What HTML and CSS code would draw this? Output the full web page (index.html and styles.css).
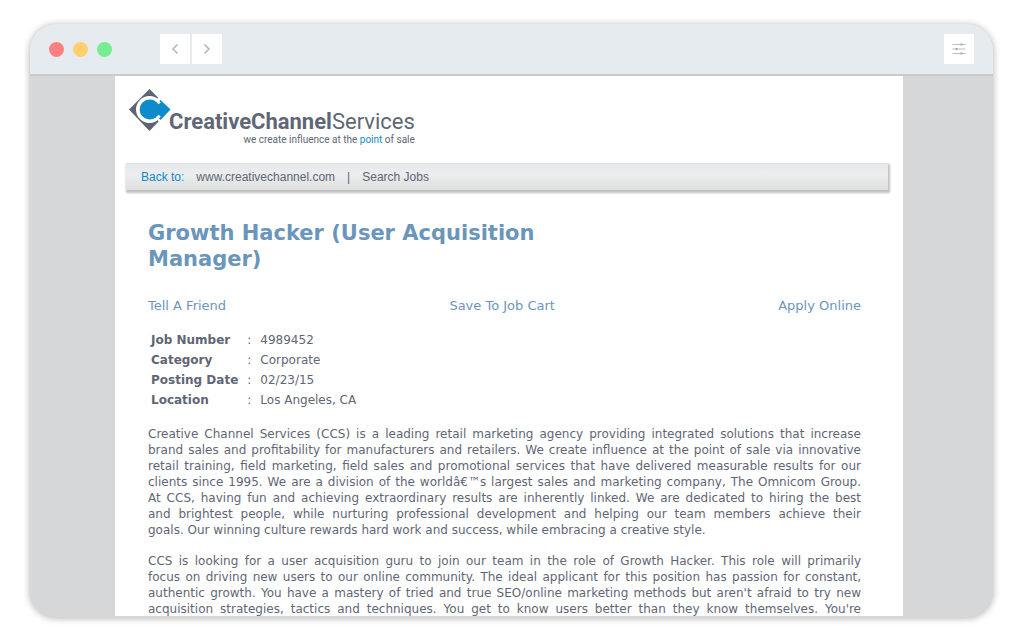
FILE: index.html
```
<!DOCTYPE html>
<html lang="en">
<head>
<meta charset="utf-8">
<title>Growth Hacker (User Acquisition Manager)</title>
<link rel="stylesheet" href="styles.css">
</head>
<body>
<div class="window">
  <header class="toolbar">
    <div class="lights"><span class="light red"></span><span class="light amber"></span><span class="light green"></span></div>
    <div class="nav">
      <button class="tool" type="button" aria-label="Back"><svg width="8" height="12" viewBox="0 0 8 12"><path d="M6.500 1.500 2 6l4.500 4.500"/></svg></button>
      <button class="tool" type="button" aria-label="Forward"><svg width="8" height="12" viewBox="0 0 8 12"><path d="M1.500 1.500 6 6l-4.500 4.500"/></svg></button>
    </div>
    <button class="tool settings" type="button" aria-label="Settings"><svg width="14" height="14" viewBox="0 0 14 14"><path class="thin" d="M0.500 2.500h13M0.500 7h13M0.500 11.500h13"/><path class="knob" d="M9.500 1.500v2M4.500 6v2M9.500 10.500v2"/></svg></button>
  </header>
  <div class="viewport">
    <main class="page">
      <div class="brand">
        <svg class="mark" width="42" height="42" viewBox="0 0 42 42">
          <path fill="#5d6473" d="M20.500 0 41 20.500 20.500 42 0 20.500z"/>
          <path fill="#fff" d="M20.500 20.500 30 7.500 33 10 44 20.500 31 34z"/>
          <circle cx="20.500" cy="20.500" r="13.500" fill="#fff"/>
          <path fill="#0d8bca" d="M20.500 20.500 31.500 11 41.500 20.500 31.500 31z"/>
          <circle cx="20.500" cy="20.500" r="10.500" fill="#0d8bca"/>
          <path fill="none" stroke="#fff" stroke-width="3" d="M30.500 14.500A11.500 11.500 0 1 0 30.500 26.500"/>
        </svg>
        <div class="words">
          <div class="name"><b>CreativeChannel</b>Services</div>
          <div class="tagline">we create influence at the <span>point</span> of sale</div>
        </div>
      </div>
      <nav class="crumbs"><span class="lead">Back to:</span><a href="#">www.creativechannel.com</a><span class="sep">|</span><a href="#">Search Jobs</a></nav>
      <article class="job">
        <h1>Growth Hacker (User Acquisition Manager)</h1>
        <div class="actions"><a href="#">Tell A Friend</a><a href="#">Save To Job Cart</a><a href="#">Apply Online</a></div>
        <table class="facts">
          <tr><th scope="row">Job Number</th><td>:</td><td>4989452</td></tr>
          <tr><th scope="row">Category</th><td>:</td><td>Corporate</td></tr>
          <tr><th scope="row">Posting Date</th><td>:</td><td>02/23/15</td></tr>
          <tr><th scope="row">Location</th><td>:</td><td>Los Angeles, CA</td></tr>
        </table>
        <p>Creative Channel Services (CCS) is a leading retail marketing agency providing integrated solutions that increase<br>
        brand sales and profitability for manufacturers and retailers. We create influence at the point of sale via innovative<br>
        retail training, field marketing, field sales and promotional services that have delivered measurable results for our<br>
        clients since 1995. We are a division of the worldâ€™s largest sales and marketing company, The Omnicom Group.<br>
        At CCS, having fun and achieving extraordinary results are inherently linked. We are dedicated to hiring the best<br>
        and brightest people, while nurturing professional development and helping our team members achieve their
        <span class="last">goals. Our winning culture rewards hard work and success, while embracing a creative style.</span></p>
        <p>CCS is looking for a user acquisition guru to join our team in the role of Growth Hacker. This role will primarily<br>
        focus on driving new users to our online community. The ideal applicant for this position has passion for constant,<br>
        authentic growth. You have a mastery of tried and true SEO/online marketing methods but aren't afraid to try new<br>
        acquisition strategies, tactics and techniques. You get to know users better than they know themselves. You're</p>
      </article>
    </main>
  </div>
</div>
</body>
</html>
```
FILE: styles.css
```
* { box-sizing: border-box; }
body {
  margin: 0;
  height: 100vh;
  padding: 24px 31px 23px 30px;
  background: #fff;
  color: #5f6675;
  font: 12px/16px Verdana, "DejaVu Sans", sans-serif;
}
a { color: inherit; text-decoration: none; }
.window {
  display: flex;
  flex-direction: column;
  height: 100%;
  overflow: hidden;
  border-radius: 26px;
  background: #d5d7d9;
  box-shadow: 0 1px 6px 1px rgba(0, 0, 0, .25);
}
.toolbar {
  display: flex;
  align-items: center;
  flex: none;
  height: 52px;
  padding: 0 19px;
  background: #e6ebef;
  border-bottom: 2px solid #c8cacc;
}
.lights { display: flex; gap: 9px; }
.light { width: 15px; height: 15px; border-radius: 50%; }
.red { background: #ff8080; }
.amber { background: #ffcf70; }
.green { background: #77ec91; }
.nav { display: flex; gap: 2px; margin-left: 48px; }
.tool {
  display: flex;
  align-items: center;
  justify-content: center;
  width: 30px;
  height: 30px;
  padding: 0;
  border: 0;
  background: #fff;
}
.tool svg { fill: none; stroke: #b5b5b5; stroke-width: 1.5; }
.tool .thin { stroke: #bdbdbd; stroke-width: 1; }
.tool .knob { stroke: #aaa; stroke-width: 2; }
.settings { margin-left: auto; }
.viewport { flex: 1; min-height: 0; padding: 0 90px 1px 85px; }
.page { height: 100%; overflow: hidden; padding: 13px 15px 0 11px; background: #fff; }
.brand { display: flex; padding-left: 3px; }
.mark { flex: none; }
.words { margin-left: -2px; padding-top: 20px; }
.name { font: 400 22px/26px Roboto, "Liberation Sans", sans-serif; }
.name b { font-weight: 700; }
.tagline { font: 10px/10px Roboto, "Liberation Sans", sans-serif; text-align: right; }
.tagline span { color: #0d8bca; }
.crumbs {
  display: flex;
  height: 27px;
  margin-top: 18px;
  padding: 5px 15px;
  background: linear-gradient(#e6e8ea, #ebedee 40%, #dedfdf);
  border-top: 1px solid #dfe2e4;
  box-shadow: 1px 2px 2px 1px rgba(0, 0, 0, .25);
  font: 12px/16px "Liberation Sans", Arial, sans-serif;
}
.lead { margin-right: 12px; color: #0d8bca; }
.sep { margin: 0 12px; }
.job { padding: 30px 27px 0 22px; }
h1 { max-width: 440px; margin: 0; color: #6b96bb; font-size: 21px; line-height: 26px; }
.actions { display: flex; justify-content: space-between; margin-top: 26px; color: #6b96bb; font-size: 13px; }
.facts { margin: 16px 0 0; border-spacing: 2px 0; border-collapse: separate; }
.facts th, .facts td { padding: 2px 6px 2px 1px; text-align: left; }
p { margin: 15px 0 0; text-align: justify; text-align-last: justify; }
.facts + p { margin-top: 16px; }
.last { display: block; text-align-last: left; }
```
